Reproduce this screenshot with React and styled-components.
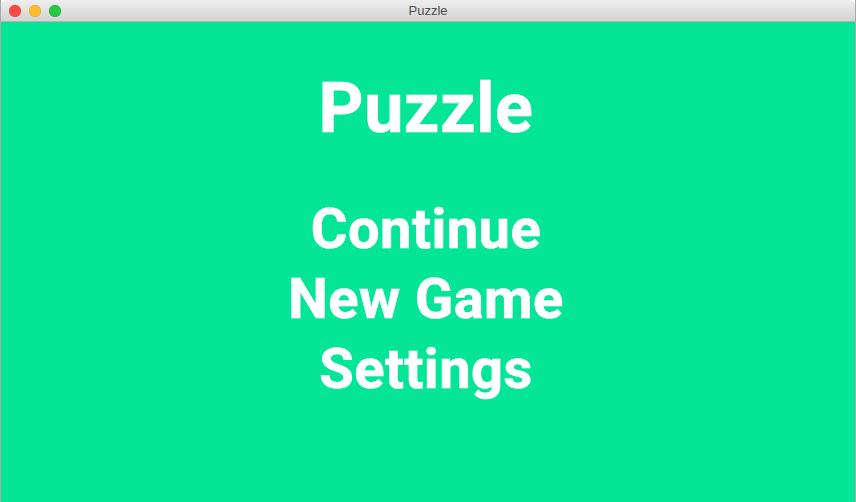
import styled, { createGlobalStyle } from "styled-components"

const GlobalStyle = createGlobalStyle`
    html, body {
        margin: 0;
        padding: 0;
        height: 100%;
        overflow: hidden;
    }
    #root {
        height: 100%;
    }
`;

const Window = styled.div`
    width: 856px;
    height: 502px;
    display: flex;
    flex-direction: column;
    box-sizing: border-box;
    border-left: 1px solid #a9a9a9;
    border-right: 1px solid #a9a9a9;
    font-family: Roboto, "Liberation Sans", sans-serif;
`;

const TitleBar = styled.div`
    height: 22px;
    box-sizing: border-box;
    flex-shrink: 0;
    display: grid;
    grid-template-columns: 1fr auto 1fr;
    align-items: center;
    padding: 0 8px;
    background: linear-gradient(#eeeeee, #d4d4d4);
    border-bottom: 1px solid #b4b4b4;
    border-radius: 5px 5px 0 0;
`;

const Lights = styled.div`
    display: flex;
    gap: 8px;
`;

const Light = styled.span`
    width: 12px;
    height: 12px;
    border-radius: 50%;
    background: ${(p) => p.color};
    box-shadow: inset 0 0 0 0.5px ${(p) => p.edge};
`;

const WindowTitle = styled.div`
    font-family: "Liberation Sans", Arial, sans-serif;
    font-size: 13px;
    color: #4d4d4d;
`;

const Content = styled.div`
    flex: 1;
    background: #05e598;
    display: flex;
    flex-direction: column;
    align-items: center;
    padding-top: 52px;
    padding-right: 4px;
    color: #ffffff;
    -webkit-text-stroke: 0.7px #ffffff;
`;

const Title = styled.h1`
    margin: 0;
    font-size: 70px;
    line-height: 69px;
    font-weight: 700;
    letter-spacing: 0.5px;
`;

const Menu = styled.div`
    margin-top: 51px;
    display: flex;
    flex-direction: column;
    align-items: center;
`;

const MenuItem = styled.div`
    font-size: 56px;
    line-height: 70px;
    font-weight: 700;
    letter-spacing: 0.5px;
    cursor: pointer;
`;

const App = () => {
    return (
        <Window>
            <GlobalStyle />
            <TitleBar>
                <Lights>
                    <Light color="#fc4b47" edge="#e0443e" />
                    <Light color="#fdbb2d" edge="#dfa023" />
                    <Light color="#2ac840" edge="#1ea834" />
                </Lights>
                <WindowTitle>Puzzle</WindowTitle>
                <div />
            </TitleBar>
            <Content>
                <Title>Puzzle</Title>
                <Menu>
                    <MenuItem>Continue</MenuItem>
                    <MenuItem>New Game</MenuItem>
                    <MenuItem>Settings</MenuItem>
                </Menu>
            </Content>
        </Window>
    )
}

export default App
